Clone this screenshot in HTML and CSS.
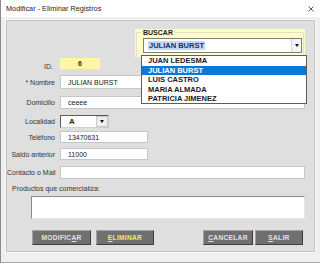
FILE: index.html
```html
<!DOCTYPE html>
<html lang="es">
<head>
<meta charset="UTF-8">
<meta name="viewport" content="width=device-width, initial-scale=1.0">
<title>Modificar - Eliminar Registros</title>
<link rel="stylesheet" href="styles.css">
</head>
<body>
    <div class="window">
        <div class="titlebar">
            <span class="title">Modificar - Eliminar Registros</span>
            <svg class="close" width="6" height="6" viewBox="0 0 6 6">
                <path d="M0.5 0.5L5.5 5.5M5.5 0.5L0.5 5.5" stroke="#333" stroke-width="0.8"/>
            </svg>
        </div>
        <div class="panel">
            <div class="search">
                <fieldset class="search-box">
                    <legend>BUSCAR</legend>
                    <div class="combo combo-search">
                        <span class="combo-text"><span class="selected-text">JULIAN BURST</span></span>
                        <span class="combo-btn"><span class="arrow"></span></span>
                    </div>
                </fieldset>
                <ul class="droplist">
                    <li>JUAN LEDESMA</li>
                    <li class="active">JULIAN BURST</li>
                    <li>LUIS CASTRO</li>
                    <li>MARIA ALMADA</li>
                    <li>PATRICIA JIMENEZ</li>
                </ul>
            </div>

            <div class="row row-id">
                <label class="field-label">ID.</label>
                <div class="id-box">6</div>
            </div>
            <div class="row row-nombre">
                <label class="field-label">* Nombre</label>
                <input class="field field-wide" type="text" value="JULIAN BURST">
            </div>
            <div class="row row-domicilio">
                <label class="field-label">Domicilio</label>
                <input class="field field-wide" type="text" value="ceeee">
            </div>
            <div class="row row-localidad">
                <label class="field-label">Localidad</label>
                <div class="combo combo-localidad">
                    <span class="combo-text">A</span>
                    <span class="combo-btn"><span class="arrow"></span></span>
                </div>
            </div>
            <div class="row row-telefono">
                <label class="field-label">Teléfono</label>
                <input class="field field-short" type="text" value="13470631">
            </div>
            <div class="row row-saldo">
                <label class="field-label">Saldo anterior</label>
                <input class="field field-short" type="text" value="11000">
            </div>
            <div class="row row-contacto">
                <label class="field-label">Contacto o Mail</label>
                <input class="field field-wide" type="text" value="">
            </div>

            <div class="products-label">Productos que comercializa:</div>
            <textarea class="products"></textarea>

            <div class="buttons">
                <button class="action-button" id="modificar-button">MODIFIC<u>A</u>R</button>
                <button class="action-button danger" id="eliminar-button"><u>E</u>LIMINAR</button>
                <button class="action-button push-right" id="cancelar-button"><u>C</u>ANCELAR</button>
                <button class="action-button" id="salir-button"><u>S</u>ALIR</button>
            </div>
        </div>
    </div>
</body>
</html>
```

FILE: styles.css
```css
html, body {
    margin: 0;
    padding: 0;
}
body {
    width: 320px;
    height: 265px;
    overflow: hidden;
    background-color: #ffffff;
    font-family: "Liberation Sans", Arial, sans-serif;
    font-size: 7px;
    color: #2a2a2a;
}
.window {
    height: 263px;
    box-sizing: border-box;
    background-color: #efefef;
    border-left: 1px solid #8c8c8c;
    border-bottom: 1px solid #a8a8a8;
}
.titlebar {
    height: 17px;
    background-color: #ffffff;
    display: flex;
    align-items: center;
    justify-content: space-between;
    padding: 0 6px 0 5px;
}
.title {
    font-size: 7.3px;
    color: #1e1e1e;
}
.close {
    display: block;
}
.panel {
    margin: 3px 5px 0 5px;
    height: 232px;
    box-sizing: border-box;
    background-color: #dfdfdf;
    border: 1px solid #c2c2c2;
    box-shadow: 0 0 0 1px #f8f8f8;
}

/* search box */
.search {
    position: relative;
    margin: 8px 0 0 128px;
    width: 170px;
    height: 28px;
    box-sizing: border-box;
    padding: 0 1px;
    background-color: #fffdc8;
}
.search-box {
    margin: 0;
    padding: 0 1px 3px 6px;
    border: 1px solid #e4e2c4;
    border-bottom-color: #fffdc8;
}
.search-box legend {
    padding: 0 2px;
    margin-left: -2px;
    font-weight: bold;
    font-size: 7px;
    line-height: 7px;
    color: #1c1c1c;
}
.combo {
    display: flex;
    box-sizing: border-box;
    background-color: #ffffff;
    border: 1px solid #7d7d7d;
}
.combo-search {
    margin-top: 2px;
    width: 159px;
    height: 15px;
}
.combo-text {
    flex: 1;
    display: flex;
    align-items: center;
    padding-left: 4px;
    font-weight: bold;
}
.selected-text {
    background-color: #c4d8f2;
    color: #1a2b63;
    font-size: 7.5px;
    line-height: 9px;
    padding: 0 1px;
}
.combo-btn {
    width: 9px;
    display: flex;
    align-items: center;
    justify-content: center;
    background-color: #f4f4f4;
    border-left: 1px solid #d4d4d4;
}
.arrow {
    width: 0;
    height: 0;
    border-left: 2px solid transparent;
    border-right: 2px solid transparent;
    border-top: 3px solid #111;
}
.droplist {
    position: absolute;
    left: 6px;
    top: 26px;
    width: 166px;
    height: 49px;
    box-sizing: border-box;
    margin: 0;
    padding: 0;
    list-style: none;
    background-color: #ffffff;
    border: 1px solid #5c5c5c;
    z-index: 2;
}
.droplist li {
    height: 9.5px;
    line-height: 9.5px;
    padding-left: 6px;
    font-weight: bold;
    font-size: 7.5px;
    color: #1a1a1a;
}
.droplist li.active {
    background-color: #0a78d6;
    color: #ffffff;
}

/* form rows */
.row {
    display: flex;
    align-items: center;
    gap: 5px;
    padding-right: 9px;
}
.field-label {
    width: 48px;
    flex-shrink: 0;
    text-align: right;
    color: #333;
    white-space: nowrap;
}
.row-id {
    margin-top: 1px;
    align-items: flex-start;
}
.row-id .field-label {
    padding-top: 5px;
    padding-right: 2px;
    width: 46px;
    line-height: 8px;
}
.id-box {
    width: 40px;
    height: 11px;
    line-height: 11px;
    text-align: center;
    font-weight: bold;
    background-color: #fdf7a6;
}
.field {
    box-sizing: border-box;
    height: 13px;
    margin: 0;
    padding: 0 0 0 7px;
    font-family: "Liberation Sans", Arial, sans-serif;
    font-size: 7px;
    color: #222;
    background-color: #ffffff;
    border: 1px solid #c6c6c6;
    outline: none;
}
.field-wide {
    flex: 1;
    min-width: 0;
}
.field-short {
    width: 88px;
    height: 12px;
}
.row-nombre {
    margin-top: 4px;
}
.row-nombre .field {
    height: 14px;
}
.row-domicilio {
    margin-top: 7px;
}
.row-localidad {
    margin-top: 6px;
}
.combo-localidad {
    width: 49px;
    height: 13px;
    border-color: #5a5a5a #cfcfcf #cfcfcf #5a5a5a;
}
.combo-localidad .combo-text {
    padding-left: 8px;
    font-size: 8px;
}
.combo-localidad .combo-btn {
    width: 10px;
    border: 1px solid #c8c8c8;
    background-color: #efefef;
}
.row-telefono {
    margin-top: 3px;
}
.row-saldo {
    margin-top: 5px;
}
.row-contacto {
    margin-top: 6px;
}

.products-label {
    margin-top: 6px;
    padding-left: 5px;
    line-height: 8px;
    color: #333;
}
.products {
    display: block;
    box-sizing: border-box;
    margin: 3px 0 0 24px;
    width: 274px;
    height: 23px;
    padding: 0;
    resize: none;
    background-color: #ffffff;
    border: 1px solid;
    border-color: #8c8c8c #e6e6e6 #e6e6e6 #8c8c8c;
    outline: none;
}

/* buttons */
.buttons {
    display: flex;
    margin-top: 11px;
    padding: 0 11px 0 25px;
}
.action-button {
    height: 15px;
    width: 59px;
    margin-right: 5px;
    padding: 0;
    box-sizing: border-box;
    background-color: #707070;
    border: 1px solid;
    border-color: #a2a2a2 #3e3e3e #3e3e3e #a2a2a2;
    color: #e2e2e2;
    font-family: "Liberation Sans", Arial, sans-serif;
    font-weight: bold;
    font-size: 6.6px;
    letter-spacing: 0.3px;
}
#eliminar-button {
    width: 58px;
}
.action-button.danger {
    color: #ecec6e;
}
.push-right {
    margin-left: auto;
}
#cancelar-button {
    width: 50px;
    margin-right: 2px;
}
#salir-button {
    width: 48px;
    margin-right: 0;
}
```
